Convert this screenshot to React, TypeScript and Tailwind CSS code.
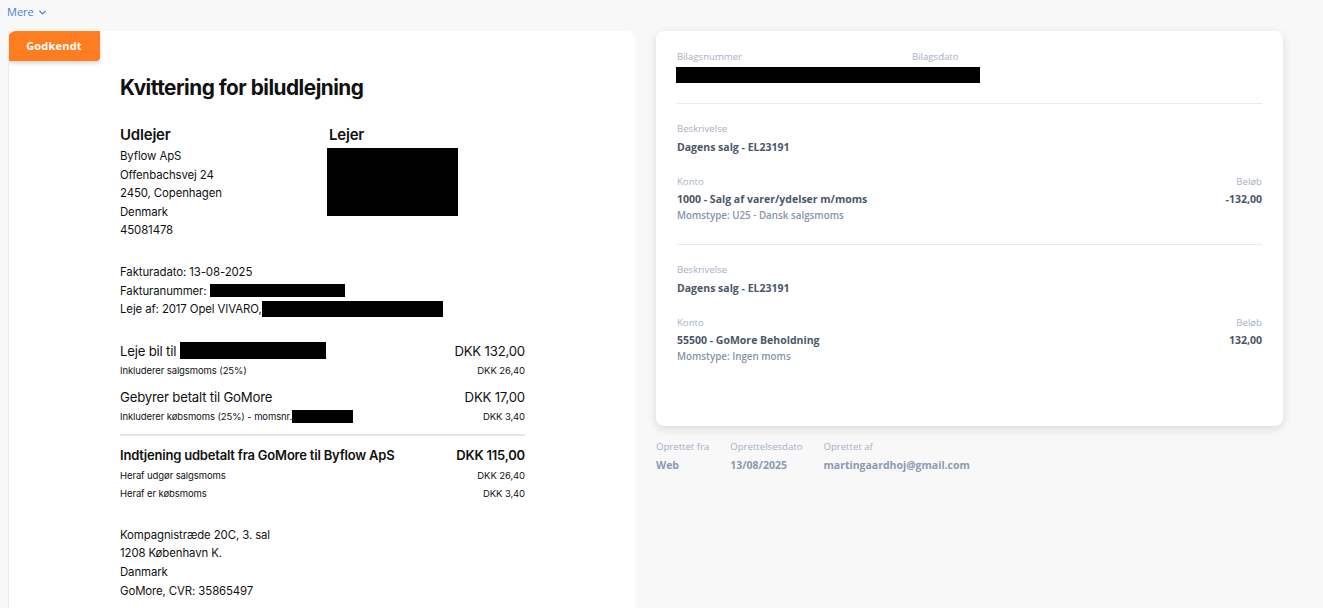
import React from 'react';
import { ChevronDown } from 'lucide-react';

const Redact: React.FC<{ className: string }> = ({ className }) => (
  <span className={`inline-block bg-black align-middle ${className}`} />
);

const Label: React.FC<{ children: React.ReactNode; className?: string }> = ({ children, className = '' }) => (
  <div className={`text-[9.6px] leading-[14px] text-[#a6b1c2] ${className}`}>{children}</div>
);

const Value: React.FC<{ children: React.ReactNode; className?: string }> = ({ children, className = '' }) => (
  <div className={`text-[10.5px] leading-[16px] font-bold text-[#4b5669] ${className}`}>{children}</div>
);

const Line: React.FC<{
  label: string;
  konto: string;
  momstype: string;
  amount: string;
}> = ({ label, konto, momstype, amount }) => (
  <div>
    <Label>Beskrivelse</Label>
    <Value className="mt-[3px]">{label}</Value>
    <div className="flex justify-between mt-[20px]">
      <div>
        <Label>Konto</Label>
        <Value className="mt-[2px]">{konto}</Value>
        <div className="text-[9.8px] leading-[14px] font-semibold text-[#8794a8] mt-[2px]">{momstype}</div>
      </div>
      <div className="text-right">
        <Label>Beløb</Label>
        <Value className="mt-[2px]">{amount}</Value>
      </div>
    </div>
  </div>
);

const Receipt: React.FC = () => (
  <div className="relative w-[627px] h-[577px] bg-white rounded-tr-[8px] border-l border-[#ececec] overflow-hidden">
    {/* Status badge */}
    <div className="absolute top-0 left-[-1px] w-[92px] h-[30px] bg-[#ff7d21] rounded-tl-[8px] rounded-br-[4px] shadow-[0_2px_4px_rgba(0,0,0,0.18)] flex items-center justify-center">
      <span className="text-white text-[11px] font-bold tracking-[0.2px]" style={{ fontFamily: '"Open Sans", sans-serif' }}>
        Godkendt
      </span>
    </div>

    <div className="pl-[111px] pr-[110px] pt-[44px] text-[#111] text-[11.4px] leading-[18.6px] tracking-[-0.1px]" style={{ fontFamily: 'Inter, "Noto Sans", sans-serif' }}>
      <h1 className="text-[20.8px] leading-[26px] font-bold tracking-[-0.5px]">Kvittering for biludlejning</h1>

      <div className="flex mt-[24px]">
        <div className="w-[209px]">
          <div className="text-[15px] leading-[20px] font-semibold tracking-[-0.2px]">Udlejer</div>
          <div className="mt-[2px]">
            <div>Byflow ApS</div>
            <div>Offenbachsvej 24</div>
            <div>2450, Copenhagen</div>
            <div>Denmark</div>
            <div>45081478</div>
          </div>
        </div>
        <div>
          <div className="text-[15px] leading-[20px] font-semibold tracking-[-0.2px]">Lejer</div>
          <div className="mt-[3px] -ml-[2px] w-[131px] h-[68px] bg-black" />
        </div>
      </div>

      <div className="mt-[23px]">
        <div>Fakturadato: 13-08-2025</div>
        <div className="flex items-center">Fakturanummer:&nbsp;<Redact className="w-[135px] h-[13px]" /></div>
        <div className="flex items-center">Leje af: 2017 Opel VIVARO,<Redact className="w-[181px] h-[16px]" /></div>
      </div>

      <div className="mt-[21px]">
        <div className="flex justify-between items-center text-[13.2px] leading-[22px] tracking-[-0.2px]">
          <span className="flex items-center">Leje bil til&nbsp;<Redact className="w-[146px] h-[17px]" /></span>
          <span>DKK 132,00</span>
        </div>
        <div className="flex justify-between text-[9.5px] leading-[16px] mt-[1px]">
          <span>Inkluderer salgsmoms (25%)</span>
          <span>DKK 26,40</span>
        </div>
        <div className="flex justify-between items-center text-[13.2px] leading-[22px] tracking-[-0.2px] mt-[7px]">
          <span>Gebyrer betalt til GoMore</span>
          <span>DKK 17,00</span>
        </div>
        <div className="flex justify-between items-center text-[9.5px] leading-[16px] mt-[1px]">
          <span className="flex items-center">Inkluderer købsmoms (25%) - momsnr.<Redact className="w-[61px] h-[13px]" /></span>
          <span>DKK 3,40</span>
        </div>
      </div>

      <div className="h-[2px] bg-[#e6e6e6] mt-[9px]" />

      <div className="mt-[8px]">
        <div className="flex justify-between text-[13px] leading-[22px] font-semibold tracking-[-0.2px]">
          <span>Indtjening udbetalt fra GoMore til Byflow ApS</span>
          <span>DKK 115,00</span>
        </div>
        <div className="flex justify-between text-[9.5px] leading-[18px] mt-[1px]">
          <span>Heraf udgør salgsmoms</span>
          <span>DKK 26,40</span>
        </div>
        <div className="flex justify-between text-[9.5px] leading-[18px]">
          <span>Heraf er købsmoms</span>
          <span>DKK 3,40</span>
        </div>
      </div>

      <div className="mt-[23px]">
        <div>Kompagnistræde 20C, 3. sal</div>
        <div>1208 København K.</div>
        <div>Danmark</div>
        <div>GoMore, CVR: 35865497</div>
      </div>
    </div>
  </div>
);

const VoucherCard: React.FC = () => (
  <div className="w-[627px]">
    <div className="bg-white rounded-[8px] shadow-[0_3px_10px_rgba(0,0,0,0.12)] h-[395px] px-[21px] pt-[19px]">
      <div className="flex">
        <div className="w-[235px]">
          <Label>Bilagsnummer</Label>
        </div>
        <Label>Bilagsdato</Label>
      </div>
      <div className="mt-[3px] -ml-[1px] w-[304px] h-[16px] bg-black" />
      <div className="h-px bg-[#e8ebef] mt-[20px]" />

      <div className="pt-[18px] pb-[21px]">
        <Line
          label="Dagens salg - EL23191"
          konto="1000 - Salg af varer/ydelser m/moms"
          momstype="Momstype: U25 - Dansk salgsmoms"
          amount="-132,00"
        />
      </div>
      <div className="h-px bg-[#e8ebef]" />
      <div className="pt-[18px]">
        <Line
          label="Dagens salg - EL23191"
          konto="55500 - GoMore Beholdning"
          momstype="Momstype: Ingen moms"
          amount="132,00"
        />
      </div>
    </div>

    <div className="flex gap-[21px] mt-[14px]">
      <div>
        <Label>Oprettet fra</Label>
        <div className="text-[10.5px] leading-[16px] font-bold text-[#8c9ab0] mt-[3px]">Web</div>
      </div>
      <div>
        <Label>Oprettelsesdato</Label>
        <div className="text-[10.5px] leading-[16px] font-bold text-[#8c9ab0] mt-[3px]">13/08/2025</div>
      </div>
      <div>
        <Label>Oprettet af</Label>
        <div className="text-[10.5px] leading-[16px] font-bold text-[#8c9ab0] mt-[3px]">martingaardhoj@gmail.com</div>
      </div>
    </div>
  </div>
);

const App: React.FC = () => {
  return (
    <div className="w-[1323px] h-[608px] overflow-hidden bg-[#f8f8f9]" style={{ fontFamily: '"Open Sans", sans-serif' }}>
      <div className="h-[31px] pl-[7px] pt-[4px]">
        <button className="flex items-center gap-[3px] text-[11px] leading-[16px] text-[#4a7fd8]">
          Mere
          <ChevronDown size={11} strokeWidth={3} />
        </button>
      </div>
      <div className="flex gap-[21px] pl-[8px]">
        <Receipt />
        <VoucherCard />
      </div>
    </div>
  );
};

export default App;
